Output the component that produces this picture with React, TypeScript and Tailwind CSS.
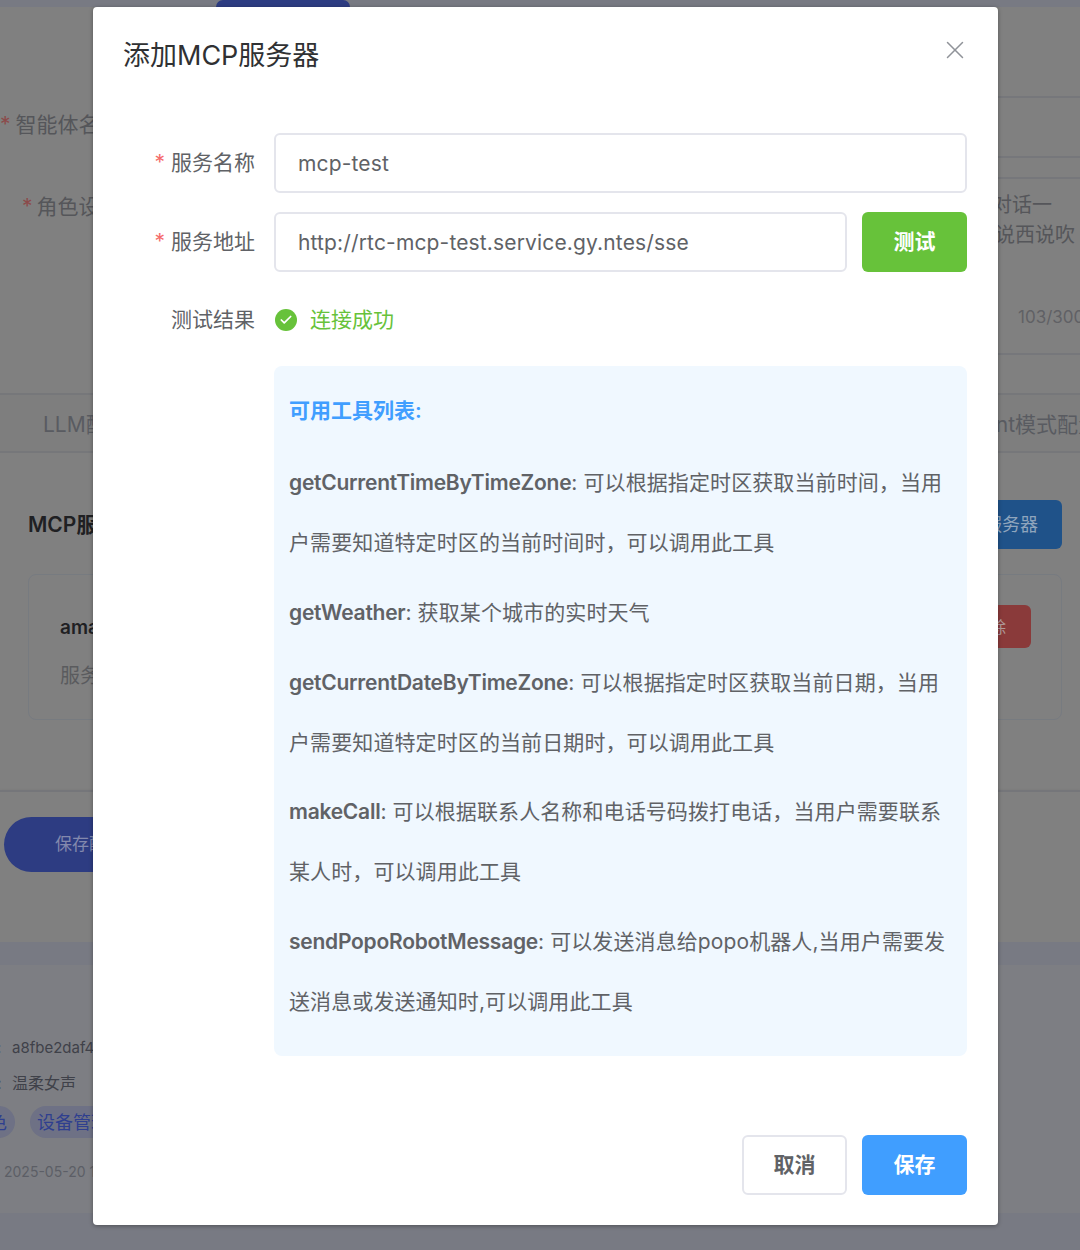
import { Check, X } from "lucide-react";

const tools = [
  {
    name: "getCurrentTimeByTimeZone",
    lines: ["可以根据指定时区获取当前时间，当用", "户需要知道特定时区的当前时间时，可以调用此工具"],
  },
  { name: "getWeather", lines: ["获取某个城市的实时天气"] },
  {
    name: "getCurrentDateByTimeZone",
    lines: ["可以根据指定时区获取当前日期，当用", "户需要知道特定时区的当前日期时，可以调用此工具"],
  },
  {
    name: "makeCall",
    lines: ["可以根据联系人名称和电话号码拨打电话，当用户需要联系", "某人时，可以调用此工具"],
  },
  {
    name: "sendPopoRobotMessage",
    lines: ["可以发送消息给popo机器人,当用户需要发", "送消息或发送通知时,可以调用此工具"],
  },
];

const watermarks = [
  "left-[360px] top-[115px]",
  "left-[530px] top-[580px]",
  "left-[20px] top-[790px]",
  "left-[690px] top-[1060px]",
];

function FieldLabel({ text, required }: { text: string; required?: boolean }) {
  return (
    <label className="w-[162px] shrink-0 text-right text-[21px] text-[#606266]">
      {required && <span className="mr-[6px] text-[#f56c6c]">*</span>}
      {text}
    </label>
  );
}

function PageBehind() {
  return (
    <div className="flex flex-col text-[#55565a]">
      <div className="h-[7px] bg-[#787a83]">
        <div className="ml-[216px] h-[7px] w-[134px] rounded-t-[20px] bg-[#2d3c82]" />
      </div>

      <section className="flex h-[386px] justify-between bg-[#808080]">
        <div className="flex flex-col pt-[103px] text-[21px] leading-[30px]">
          <div>
            <span className="mr-[5px] text-[#8c4a4a]">*</span>智能体名称
          </div>
          <div className="mt-[52px] pl-[22px]">
            <span className="mr-[4px] text-[#8c4a4a]">*</span>角色设定
          </div>
        </div>
        <div className="flex w-[120px] flex-col pt-[89px]">
          <div className="h-[62px] border-y-2 border-[#76777b]" />
          <div className="mt-[19px] h-[178px] overflow-hidden border-y-2 border-[#76777b] pl-[35px] pt-[11px] text-[20px] leading-[31px] whitespace-nowrap">
            <div className="-ml-[3px]">对话一</div>
            <div className="-mt-px">说西说吹</div>
            <div className="mt-[51px] pl-[23px] text-[17px] text-[#606165]">103/300</div>
          </div>
        </div>
      </section>

      <nav className="flex h-[60px] items-center justify-between border-y-2 border-[#76777a] bg-[#7e7e7e] pl-[43px] pt-[3px] text-[21px] text-[#595b61]">
        <span>LLM配置</span>
        <span className="-mr-[19px] shrink-0">Agent模式配置</span>
      </nav>

      <section className="flex h-[337px] flex-col bg-[#808080] px-[18px] pt-[47px]">
        <div className="flex h-[49px] items-center justify-between">
          <h3 className="pl-[10px] text-[21px] font-semibold text-[#1f2023]">MCP服务器配置</h3>
          <button className="h-[49px] rounded-[6px] bg-[#1f5289] px-[24px] text-[18px] text-[#8fa5bd]">
            添加服务器
          </button>
        </div>
        <div className="ml-[10px] mt-[25px] flex h-[146px] justify-between rounded-[8px] border border-[#777b80] pl-[31px] pr-[30px] pt-[30px]">
          <div>
            <div className="pt-px text-[19px] font-semibold leading-[44px] text-[#1f2023]">amap-maps</div>
            <div className="mt-[4px] text-[20px] leading-[44px] text-[#5a5b5e]">服务地址</div>
          </div>
          <button className="h-[43px] rounded-[6px] bg-[#8a3a3a] px-[25px] text-[16px] text-[#b09a9a]">
            删除
          </button>
        </div>
      </section>

      <footer className="h-[152px] border-t-2 border-[#75767a] bg-[#808080] pl-[4px] pt-[25px] shadow-[0_2px_4px_rgba(0,0,0,0.2)]">
        <button className="h-[55px] w-[200px] rounded-full bg-[#2d3c82] pl-[51px] text-left text-[17px] text-[#8389ad]">
          保存配置
        </button>
      </footer>

      <div className="h-[23px] bg-[#787a83]" />

      <section className="flex h-[248px] flex-col bg-[#7d7e83] pt-[70px] text-[#3f4149]">
        <div className="-ml-[3px] flex h-[26px] items-center text-[15px]">
          <span className="w-[15px]">:</span>a8fbe2daf4c1
        </div>
        <div className="-ml-[3px] mt-[9px] flex h-[26px] items-center text-[16px]">
          <span className="w-[15px]">:</span>温柔女声
        </div>
        <div className="mt-[10px] flex gap-[15px] text-[18px] text-[#2f3f8f]">
          <span className="-ml-[37px] flex h-[32px] items-center rounded-full bg-[#6e7185] px-[8px]">
            角色
          </span>
          <span className="flex h-[32px] items-center rounded-full bg-[#6e7185] px-[7px]">设备管理</span>
        </div>
        <div className="mt-[19px] pl-[4px] text-[14px] leading-[30px] text-[#5c5e66]">2025-05-20 10:30:00</div>
      </section>

      <div className="h-[37px] bg-[#787a83]" />
    </div>
  );
}

export default function App() {
  return (
    <div className="relative h-[1250px] w-[1080px] overflow-hidden bg-[#787a83] font-['Inter','Noto_Sans_CJK_SC',sans-serif]">
      <PageBehind />

      <div className="absolute left-[93px] top-[7px] flex h-[1218px] w-[905px] flex-col overflow-hidden rounded-[4px] bg-white shadow-[0_1px_4px_rgba(0,0,0,0.35)]">
        {watermarks.map((pos) => (
          <span
            key={pos}
            className={`absolute -rotate-[25deg] text-[36px] text-[#000]/[0.015] ${pos}`}
          >
            PC-057185
          </span>
        ))}

        <header className="relative flex h-[126px] shrink-0 justify-between pl-[30px] pr-[31px] pt-[29px]">
          <h2 className="text-[27px] leading-[40px] text-[#303133]">添加MCP服务器</h2>
          <X size={30} strokeWidth={1.2} className="-mr-[3px] -mt-[1px] text-[#909399]" />
        </header>

        <div className="relative flex flex-col pr-[31px]">
          <div className="flex items-center gap-[19px]">
            <FieldLabel text="服务名称" required />
            <input
              readOnly
              value="mcp-test"
              className="h-[60px] flex-1 rounded-[6px] border-2 border-[#e4e5ec] bg-transparent pl-[22px] text-[21px] tracking-[0.15px] text-[#606266]"
            />
          </div>
          <div className="mt-[19px] flex items-center gap-[19px]">
            <FieldLabel text="服务地址" required />
            <input
              readOnly
              value="http://rtc-mcp-test.service.gy.ntes/sse"
              className="h-[60px] flex-1 rounded-[6px] border-2 border-[#e4e5ec] bg-transparent pl-[22px] text-[21px] tracking-[0.15px] text-[#606266]"
            />
            <button className="-ml-[4px] h-[60px] w-[105px] rounded-[6px] bg-[#67c23a] text-[21px] font-semibold text-white">
              测试
            </button>
          </div>
          <div className="mt-[33px] flex h-[30px] items-center gap-[19px]">
            <FieldLabel text="测试结果" />
            <div className="ml-px flex items-center gap-[13px] text-[21px] text-[#67c23a]">
              <span className="flex h-[22px] w-[22px] items-center justify-center rounded-full bg-[#67c23a]">
                <Check size={14} strokeWidth={3} className="text-white" />
              </span>
              连接成功
            </div>
          </div>

          <div className="ml-[181px] mt-[31px] h-[690px] rounded-[8px] bg-[#f0f8ff] px-[15px] pt-[30px]">
            <h4 className="text-[21px] font-semibold leading-[30px] text-[#409eff]">可用工具列表:</h4>
            <div className="mt-[27px] flex flex-col gap-[9.75px] text-[21px] leading-[60px] tracking-[0.1px] text-[#606266]">
              {tools.map((tool) => (
                <p key={tool.name} className="whitespace-nowrap">
                  <span className="font-semibold tracking-[-0.25px]">{tool.name}</span>: {tool.lines[0]}
                  {tool.lines.slice(1).map((line) => (
                    <span key={line} className="block">
                      {line}
                    </span>
                  ))}
                </p>
              ))}
            </div>
          </div>
        </div>

        <footer className="relative mt-[78.5px] flex justify-end gap-[15px] pr-[31px]">
          <button className="h-[60px] w-[105px] rounded-[6px] border-2 border-[#e4e5ec] text-[21px] font-semibold text-[#606266]">
            取消
          </button>
          <button className="h-[60px] w-[105px] rounded-[6px] bg-[#409eff] text-[21px] font-semibold text-white">
            保存
          </button>
        </footer>
      </div>
    </div>
  );
}
